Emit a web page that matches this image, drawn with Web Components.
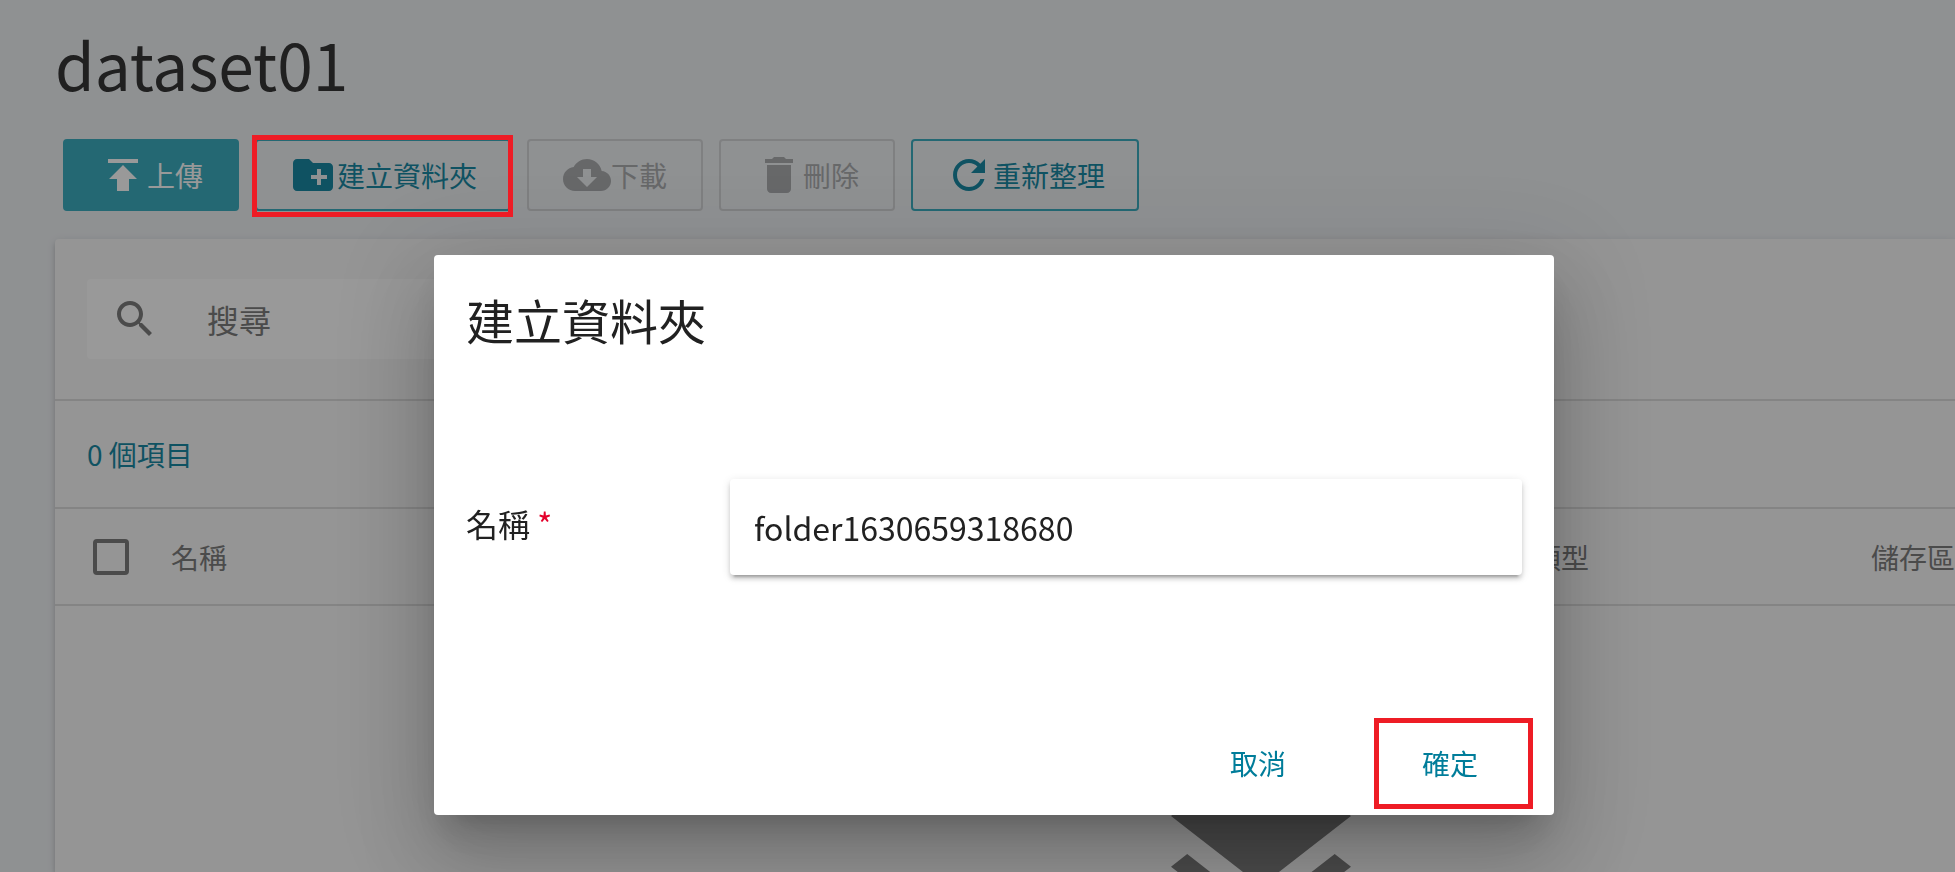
<!DOCTYPE html>
<html lang="zh-Hant">
<head>
<meta charset="utf-8">
<meta name="viewport" content="width=device-width, initial-scale=1">
<title>dataset01</title>
<style>
  html, body { margin: 0; height: 100%; overflow: hidden; }
  body {
    background: #edf0f3;
    color: #212121;
    font-family: "Noto Sans CJK TC", "Noto Sans", sans-serif;
    --accent: #007d9a;
    --accent-fill: #27a5b9;
    --muted: #6f6f6f;
    --line: #d9d9d9;
    --mark: #ee1c25;
  }
</style>
</head>
<body>
<dataset-page>
  <span slot="title">dataset01</span>
  <tool-button slot="actions" variant="filled">
    <ui-icon slot="icon" name="publish"></ui-icon>上傳
  </tool-button>
  <tool-button slot="actions" variant="outlined" marked style="--mark-inset: -4px -2px -6px -3px">
    <ui-icon slot="icon" name="folder"></ui-icon>建立資料夾
  </tool-button>
  <tool-button slot="actions" variant="outlined" disabled>
    <ui-icon slot="icon" name="cloud"></ui-icon>下載
  </tool-button>
  <tool-button slot="actions" variant="outlined" disabled>
    <ui-icon slot="icon" name="trash"></ui-icon>刪除
  </tool-button>
  <tool-button slot="actions" variant="outlined">
    <ui-icon slot="icon" name="refresh"></ui-icon>重新整理
  </tool-button>
  <file-panel></file-panel>
</dataset-page>

<modal-dialog>
  <span slot="title">建立資料夾</span>
  <form-field label="名稱" value="folder1630659318680"></form-field>
  <tool-button slot="actions" variant="text">取消</tool-button>
  <tool-button slot="actions" variant="text" marked style="--mark-inset: -9px 5px -10px 12px">確定</tool-button>
</modal-dialog>

<script>
const define = (name, render, ready) => customElements.define(name, class extends HTMLElement {
  constructor() {
    super();
    this.attachShadow({ mode: 'open' });
  }
  connectedCallback() {
    this.shadowRoot.innerHTML = render(this);
    if (ready) ready(this);
  }
});

const ICONS = {
  publish: 'M4.5 4v2h15V4zM5 14h4v6h6v-6h4l-7-7z',
  folder: 'M20 6h-8l-2-2H4c-1.11 0-1.99.89-1.99 2L2 18c0 1.11.89 2 2 2h16c1.11 0 2-.89 2-2V8c0-1.11-.89-2-2-2zm-1 8h-3v3h-2v-3h-3v-2h3V9h2v3h3v2z',
  cloud: 'M19.35 10.04C18.67 6.59 15.64 4 12 4 9.11 4 6.6 5.64 5.35 8.04 2.34 8.36 0 10.91 0 14c0 3.31 2.69 6 6 6h13c2.76 0 5-2.24 5-5 0-2.64-2.05-4.78-4.65-4.96zM17 13l-5 5-5-5h3V9h4v4h3z',
  trash: 'M6 19c0 1.1.9 2 2 2h8c1.1 0 2-.9 2-2V7H6v12zM19 4h-3.5l-1-1h-5l-1 1H5v2h14V4z',
  refresh: 'M17.65 6.35C16.2 4.9 14.21 4 12 4c-4.42 0-7.99 3.58-7.99 8s3.57 8 7.99 8c3.73 0 6.84-2.55 7.73-6h-2.08c-.82 2.33-3.04 4-5.65 4-3.31 0-6-2.69-6-6s2.69-6 6-6c1.66 0 3.14.69 4.22 1.78L13 11h7V4l-2.35 2.35z',
  search: 'M15.5 14h-.79l-.28-.27C15.41 12.59 16 11.11 16 9.5 16 5.91 13.09 3 9.5 3S3 5.91 3 9.5 5.91 16 9.5 16c1.61 0 3.09-.59 4.23-1.57l.27.28v.79l5 4.99L20.49 19l-4.99-5zm-6 0C7.01 14 5 11.99 5 9.5S7.01 5 9.5 5 14 7.01 14 9.5 11.99 14 9.5 14z',
  layers: 'M11.99 18.54l-7.37-5.73L3 14.07l9 7 9-7-1.63-1.27-7.38 5.74zM12 16l7.36-5.73L21 9l-9-7-9 7 1.63 1.27L12 16z'
};

define('ui-icon', el => `
  <style>
    :host { display: block; flex: none; width: var(--icon-size, 48px); height: var(--icon-size, 48px); }
    svg { display: block; width: 100%; height: 100%; fill: currentColor; }
  </style>
  <svg viewBox="0 0 24 24" aria-hidden="true"><path d="${ICONS[el.getAttribute('name')]}"/></svg>`);

define('tool-button', el => `
  <style>
    :host { display: block; position: relative; flex: none; }
    button {
      display: flex; align-items: center; justify-content: center;
      box-sizing: border-box; min-width: 176px; height: 72px; padding: 0 32px;
      border: 2px solid transparent; border-radius: 4px; background: none;
      color: var(--accent); font: inherit; font-size: 28px; line-height: 40px; white-space: nowrap;
    }
    :host([variant="filled"]) button { background: var(--accent-fill); border-color: var(--accent-fill); color: #fff; }
    :host([variant="outlined"]) button { border-color: var(--accent-fill); }
    :host([disabled]) button { border-color: #cfd1d3; color: #a3a5a7; }
    :host([marked])::after {
      content: ""; position: absolute; z-index: 3; inset: var(--mark-inset);
      border: 5px solid var(--mark); pointer-events: none;
    }
  </style>
  <button type="button" ${el.hasAttribute('disabled') ? 'disabled' : ''}><slot name="icon"></slot><span><slot></slot></span></button>`);

define('dataset-page', () => `
  <style>
    :host { display: flex; flex-direction: column; min-height: 100%; padding-left: 55px; }
    h1 { margin: 23px 0 36px; font-size: 64px; line-height: 80px; font-weight: 400; }
    .actions { display: flex; gap: 16px; margin: 0 0 28px 8px; }
    .body { flex: 1; display: flex; flex-direction: column; }
  </style>
  <h1><slot name="title"></slot></h1>
  <div class="actions"><slot name="actions"></slot></div>
  <div class="body"><slot></slot></div>`);

define('file-panel', () => `
  <style>
    :host {
      display: block; flex: 1; background: #f7f7f7; border-radius: 4px 0 0 0;
      box-shadow: 0 6px 2px -4px rgba(0,0,0,.2), 0 4px 4px rgba(0,0,0,.14), 0 2px 10px rgba(0,0,0,.12);
    }
    .search { padding: 40px 32px; border-bottom: 2px solid var(--line); }
    .box {
      display: flex; align-items: center; gap: 48px; box-sizing: border-box;
      max-width: 720px; height: 80px; padding: 0 24px; border-radius: 4px;
      background: #fff; color: var(--muted);
    }
    .box input {
      flex: 1; min-width: 0; border: 0; padding: 0; background: none;
      font: inherit; font-size: 32px; line-height: 48px; color: inherit; outline: 0;
    }
    .box input::placeholder { color: inherit; opacity: 1; }
    .count { margin: 0; padding: 0 32px; font-size: 28px; line-height: 106px; color: var(--accent); border-bottom: 2px solid var(--line); }
    table { width: 100%; table-layout: fixed; border-collapse: separate; border-spacing: 0; }
    th {
      height: 95px; padding: 0; border-bottom: 2px solid var(--line); text-align: left;
      font-size: 28px; line-height: 40px; font-weight: 400; color: var(--muted); white-space: nowrap;
    }
    th.pick { width: 78px; padding-left: 38px; }
    th.type { width: 338px; }
    th.store { width: 84px; }
    input[type="checkbox"] {
      display: block; appearance: none; box-sizing: border-box; width: 36px; height: 36px; margin: 0;
      border: 4px solid var(--muted); border-radius: 4px;
    }
    .empty { --icon-size: 240px; padding: 120px 0 0 1086px; height: 146px; overflow: hidden; color: var(--muted); }
  </style>
  <div class="search">
    <div class="box"><ui-icon name="search"></ui-icon><input type="text" placeholder="搜尋" aria-label="搜尋"></div>
  </div>
  <p class="count">0 個項目</p>
  <table>
    <thead><tr>
      <th class="pick"><input type="checkbox" aria-label="名稱"></th>
      <th>名稱</th>
      <th class="type">類型</th>
      <th class="store">儲存區</th>
    </tr></thead>
  </table>
  <div class="empty"><ui-icon name="layers"></ui-icon></div>`);

define('form-field', el => `
  <style>
    :host { display: grid; grid-template-columns: 264px 1fr; align-items: start; font-size: 32px; line-height: 48px; }
    label { padding-top: 20px; }
    .required { color: #e4002b; }
    input {
      box-sizing: border-box; width: 100%; height: 96px; padding: 0 24px; margin: 0;
      border: 0; border-radius: 4px; background: #fff; outline: 0;
      color: inherit; font: inherit;
      box-shadow: 0 6px 2px -4px rgba(0,0,0,.2), 0 4px 4px rgba(0,0,0,.14), 0 2px 10px rgba(0,0,0,.12);
    }
  </style>
  <label for="field">${el.getAttribute('label')} <span class="required">*</span></label>
  <input id="field" type="text" required value="${el.getAttribute('value')}">`);

define('modal-dialog', () => `
  <style>
    :host {
      position: fixed; inset: 0; z-index: 2; box-sizing: border-box;
      display: flex; align-items: flex-start; justify-content: center; padding: 255px 0 0 33px;
    }
    .sheet {
      display: flex; flex-direction: column; box-sizing: border-box;
      width: 1120px; max-width: 100%; min-height: 560px; padding: 32px 32px 16px;
      background: #fff; border-radius: 4px;
      box-shadow: 0 22px 30px -14px rgba(0,0,0,.2), 0 48px 76px 6px rgba(0,0,0,.14), 0 18px 92px 16px rgba(0,0,0,.12);
    }
    h2 { margin: 0 0 128px; font-size: 48px; line-height: 64px; font-weight: 400; }
    .content { flex: 1; }
    .actions { display: flex; justify-content: flex-end; gap: 16px; margin-right: -16px; }
  </style>
  <section class="sheet" role="dialog" aria-modal="true" aria-labelledby="heading">
    <h2 id="heading"><slot name="title"></slot></h2>
    <div class="content"><slot></slot></div>
    <div class="actions"><slot name="actions"></slot></div>
  </section>`, el => {
  const shade = document.createElement('modal-shade');
  el.before(shade);
});

define('modal-shade', () => `
  <style>:host { position: fixed; inset: 0; z-index: 1; background: rgba(33,33,33,.46); }</style>`);
</script>
</body>
</html>
